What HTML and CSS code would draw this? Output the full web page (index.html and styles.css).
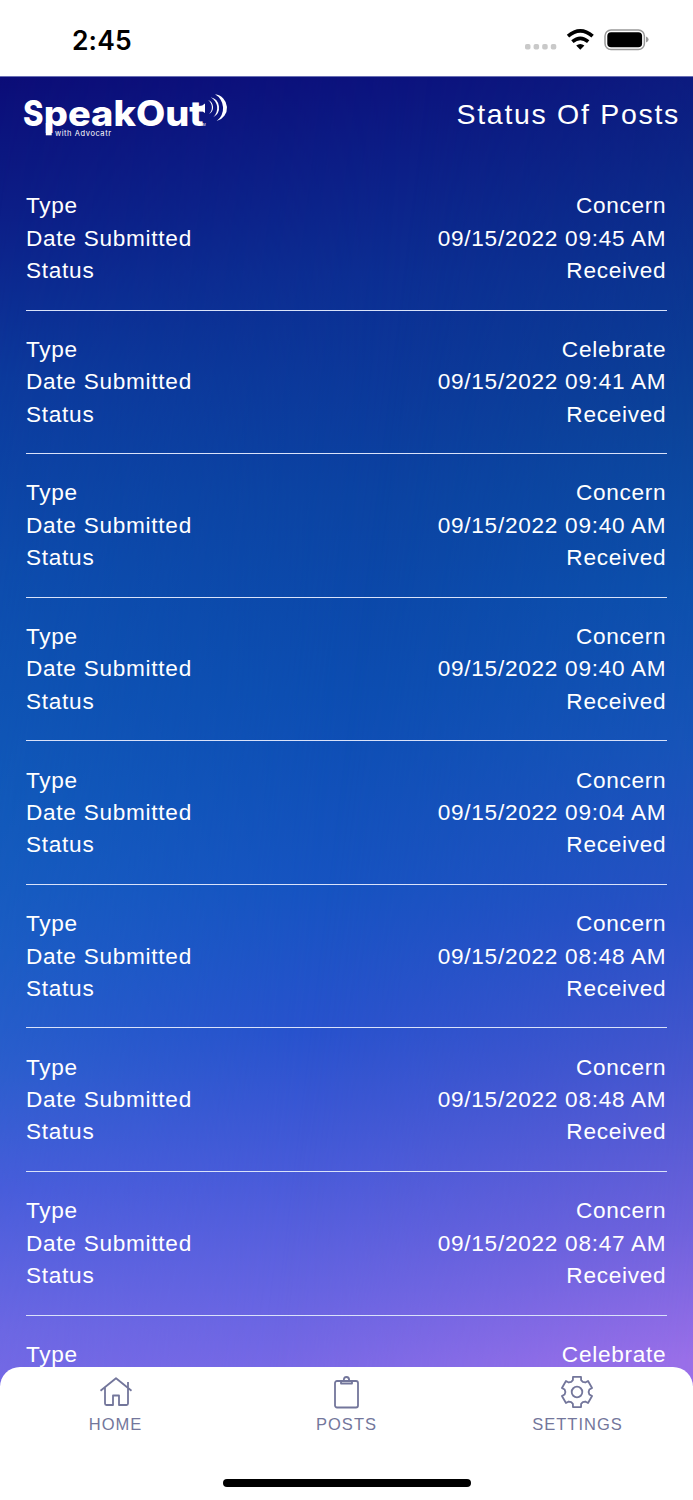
FILE: index.html
```
<!DOCTYPE html>
<html lang="en"><head><meta charset="utf-8"><title>Status Of Posts</title><link rel="stylesheet" href="styles.css"></head>
<body>
<div class="phone">
  <div class="statusbar"><span class="time">2:45</span>
    <svg class="indicators" width="126" height="24" viewBox="0 0 126 24">
      <g fill="#c9c9c9"><rect x="1" y="16" width="5.5" height="5.5" rx="1.8"/><rect x="9.6" y="16" width="5.5" height="5.5" rx="1.8"/><rect x="18.2" y="16" width="5.5" height="5.5" rx="1.8"/><rect x="26.8" y="16" width="5.5" height="5.5" rx="1.8"/></g>
      <g fill="none" stroke="#000" stroke-width="3.6"><path d="M44 8.200Q56.300-2.500 68.600 8.200"/><path d="M48.400 13.700Q56.300 7 64.200 13.700"/></g>
      <path d="M52.200 17.600Q56.300 14.400 60.400 17.600L56.300 21.800Z"/>
      <rect x="81" y="1.900" width="39.400" height="19.600" rx="6" fill="none" stroke="#999" stroke-width="1.500"/>
      <rect x="83.300" y="4.200" width="34.800" height="15" rx="3.800"/><path d="M122 8.500Q124.600 9.300 124.600 11.500T122 14.500Z" fill="#999"/>
    </svg>
  </div>
  <div class="screen">
    <header class="header">
      <svg class="logo" width="210" height="48" viewBox="0 0 210 48" fill="#fff">
        <text class="wordmark" x="-1" y="32.500" textLength="20.500" lengthAdjust="spacingAndGlyphs">S</text>
        <text class="wordmark" x="19.800" y="32.500" textLength="160" lengthAdjust="spacingAndGlyphs">peakOut</text>
        <rect x="21.800" y="30" width="5.900" height="12.300"/>
        <text class="tagline" x="31" y="42.800" textLength="56">with Advocatr</text>
        <path d="M174 13Q178 13.500 181 10.500V20Q178 17 174 17.500Z"/>
        <path d="M184 7A7.700 7.700 0 0 1 185 21A9 9 0 0 0 184 7Z"/>
        <path d="M186.700 4.300A10.700 10.700 0 0 1 189.300 24.200A12.300 12.300 0 0 0 186.700 4.300Z"/>
        <path d="M191 1.300A13.600 13.600 0 0 1 192.700 28A16 16 0 0 0 191 1.300Z"/>
        <text class="tm" x="177" y="33">TM</text>
      </svg>
      <h1 class="title">Status Of Posts</h1>
    </header>
    <main class="list" id="list"></main>
  </div>
  <nav class="tabs">
    <div class="tab"><svg width="36" height="36" viewBox="0 0 36 36"><path d="M2.500 16.800L18 4.300l15.500 12.500M7 13.500v16q0 1.500 1.500 1.500H15V21.500h6V31h7.500q1.500 0 1.500-1.500V8M30 13.500v-5"/></svg><span>HOME</span></div>
    <div class="tab"><svg width="36" height="36" viewBox="0 0 36 36"><rect x="6" y="7" width="23" height="26.500" rx="2"/><path d="M12 7v2.500h11V7M14.800 6.500q0-3.500 2.700-3.500t2.700 3.500"/></svg><span>POSTS</span></div>
    <div class="tab"><svg width="36" height="36" viewBox="0 0 36 36"><path id="gear" d=""/><circle cx="18" cy="18" r="5.300"/></svg><span>SETTINGS</span></div>
    <div class="home-bar"></div>
  </nav>
</div>
<script src="app.js"></script>
</body></html>
```
FILE: styles.css
```
*{box-sizing:border-box}
body{margin:0;background:#fff;font-family:"Liberation Sans",Arial,sans-serif}
.phone{width:693px;height:1500px;display:flex;flex-direction:column;overflow:hidden}
.statusbar{height:76px;flex:none;display:flex;justify-content:space-between;align-items:flex-start;padding:28px 43px 0 72px}
.time{margin-top:-1px;font:600 26.5px/26px Inter,sans-serif;letter-spacing:.1px}
.screen{position:relative;isolation:isolate;height:1310px;flex:none;overflow:hidden;color:#fff;border-top:1px solid #6a70b5;background:linear-gradient(#0c0d78 0%,#0c1f88 11%,#0c3a9d 23%,#0d4cad 37%,#115bba 55%,#1b60c4 67%,#2a62cc 76%,#465edb 85%,#6c68e3 96%,#7269e5)}
.screen::before,.screen::after{content:"";position:absolute;z-index:-1;inset:0}
.screen::before{background:linear-gradient(#0c137e 0%,#0c2e92 15%,#0b43a2 32%,#0c4db1 47%,#1653c1 62%,#2852cd 73%,#495bd9 84%,#6865e2 94%,#7a69e6);mask-image:linear-gradient(97deg,transparent,#000 50%)}
.screen::after{background:linear-gradient(#0d2080 0%,#0b358f 14%,#0c4699 26%,#0d52ad 39%,#1955b9 51%,#2b50c5 64%,#4a57cf 76%,#7062dc 88%,#9a6fe8 98%);mask-image:linear-gradient(97deg,transparent 50%,#000)}
.header{height:113.4px;display:flex;justify-content:space-between;align-items:flex-start;padding:16px 13px 0 24px}
.logo{overflow:visible}
.wordmark{font:800 35px Inter,sans-serif}
.tagline{font:7.5px Inter,sans-serif}
.tm{font:3px Inter,sans-serif}
.title{margin:3px 0 0;font-size:28.5px;line-height:36px;font-weight:400;letter-spacing:1.7px}
.list{padding:0 26px}
.post{padding-bottom:22.2px;margin-bottom:23.2px;border-bottom:1px solid #d9e2fa}
.row{display:flex;justify-content:space-between;height:32.4px;line-height:32.4px;font-size:22.6px;letter-spacing:.73px;padding-right:.6px}
.tabs{height:133px;flex:none;margin-top:-19px;position:relative;background:#fff;border-radius:20px 20px 0 0;display:grid;grid-template-columns:repeat(3,1fr);grid-template-rows:92px 1fr;justify-items:center;padding-top:7px}
.tab{display:flex;flex-direction:column;align-items:center;color:#73769b;font-size:16.5px;letter-spacing:1px;line-height:20px;gap:4px}
.tab svg{fill:none;stroke:#73769b;stroke-width:1.8;stroke-linejoin:round}
.home-bar{grid-column:1/4;width:248px;height:8px;margin-top:13px;border-radius:4px;background:#000}
```
FILE: app.js
```
const posts = [["Concern","09:45"],["Celebrate","09:41"],["Concern","09:40"],["Concern","09:40"],["Concern","09:04"],["Concern","08:48"],["Concern","08:48"],["Concern","08:47"],["Celebrate"]];
const row = (label, value) => `<div class="row"><span>${label}</span><span>${value}</span></div>`;
document.getElementById("list").innerHTML = posts.map(([type,time]) => `<section class="post">${row("Type",type)}${time ? row("Date Submitted",`09/15/2022 ${time} AM`)+row("Status","Received") : ""}</section>`).join("");
// Six-tooth cog outline.
const pts = [];
for (let i = 0; i < 6; i++) for (const [a,r] of [[-15,15.6],[15,15.6],[19,12.6],[30,11.6],[41,12.6]]) {
  const t = (i*60+a-90)*Math.PI/180;
  pts.push(`${(18+r*Math.cos(t)).toFixed(2)} ${(18+r*Math.sin(t)).toFixed(2)}`);
}
document.getElementById("gear").setAttribute("d", "M"+pts.join("L")+"Z");
```
